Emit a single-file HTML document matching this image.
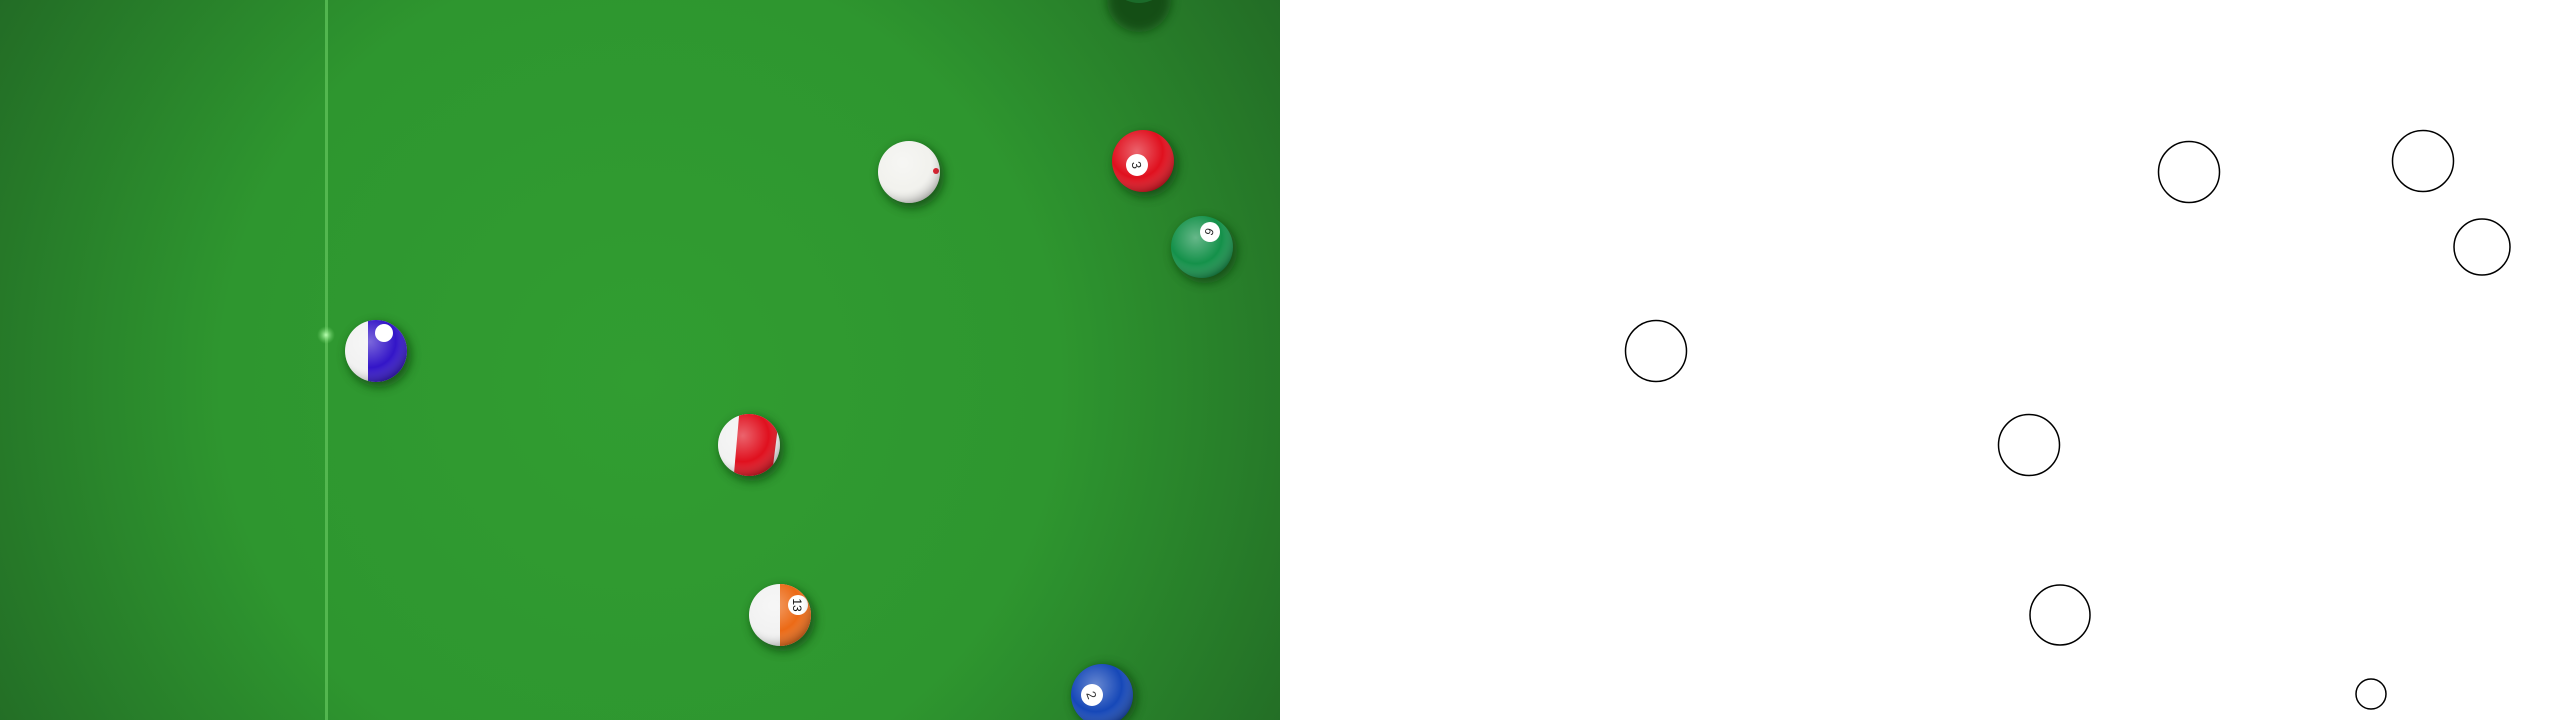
<!DOCTYPE html>
<html><head><meta charset="utf-8"><style>
html,body{margin:0;padding:0;width:2560px;height:720px;overflow:hidden;background:#fff}
</style></head><body>
<svg width="2560" height="720" viewBox="0 0 2560 720" xmlns="http://www.w3.org/2000/svg" style="display:block">
<defs>
<radialGradient id="felt" cx="640" cy="380" r="760" gradientUnits="userSpaceOnUse">
<stop offset="0" stop-color="#319d31"/><stop offset="0.55" stop-color="#2e962f"/><stop offset="1" stop-color="#226a25"/>
</radialGradient>
<radialGradient id="shade" cx="0.4" cy="0.35" r="0.7">
<stop offset="0" stop-color="#fff" stop-opacity="0.35"/><stop offset="0.6" stop-color="#fff" stop-opacity="0"/><stop offset="1" stop-color="#000" stop-opacity="0.35"/>
</radialGradient>
<filter id="sh" x="-50%" y="-50%" width="200%" height="200%"><feGaussianBlur stdDeviation="5"/></filter>
<radialGradient id="glow"><stop offset="0" stop-color="#b8ffb0"/><stop offset="1" stop-color="#6fd36a" stop-opacity="0"/></radialGradient>
<clipPath id="c1"><circle cx="376" cy="351" r="31"/></clipPath>
<clipPath id="c2"><circle cx="749" cy="445" r="31"/></clipPath>
<clipPath id="c3"><circle cx="780" cy="615" r="31"/></clipPath>
</defs>
<rect x="0" y="0" width="1280" height="720" fill="url(#felt)"/>
<rect x="325" y="0" width="3" height="720" fill="#5dbf57" opacity="0.8"/>
<circle cx="326" cy="335" r="9" fill="url(#glow)"/>
<g filter="url(#sh)" fill="#0b3a0c" opacity="0.7">
<circle cx="912" cy="176" r="32"/><circle cx="1146" cy="165" r="32"/><circle cx="1205" cy="251" r="32"/>
<circle cx="379" cy="355" r="32"/><circle cx="752" cy="449" r="32"/><circle cx="783" cy="619" r="32"/><circle cx="1105" cy="697" r="32"/><circle cx="1139" cy="0" r="32"/>
</g>
<!-- cue -->
<circle cx="909" cy="172" r="31" fill="#f2f2ee"/><circle cx="936" cy="171" r="3" fill="#e01020"/>
<!-- 3 -->
<circle cx="1143" cy="161" r="31" fill="#e0101e"/><circle cx="1137" cy="165" r="11" fill="#fff"/>
<text x="1137" y="170" font-family="Liberation Sans,sans-serif" font-size="13" text-anchor="middle" transform="rotate(80 1137 165)">3</text>
<!-- 6 -->
<circle cx="1202" cy="247" r="31" fill="#14914a"/><circle cx="1210" cy="232" r="10" fill="#fff"/>
<text x="1210" y="237" font-family="Liberation Sans,sans-serif" font-size="12" text-anchor="middle" transform="rotate(110 1210 232)">6</text>
<!-- 12 stripe -->
<circle cx="376" cy="351" r="31" fill="#f2f2f2"/>
<g clip-path="url(#c1)"><rect x="368" y="310" width="45" height="90" fill="#3315c8"/></g>
<circle cx="384" cy="333" r="9" fill="#fff"/>
<!-- 11 stripe -->
<circle cx="749" cy="445" r="31" fill="#f2f2f2"/>
<g clip-path="url(#c2)"><polygon points="740,405 780,410 770,490 733,485" fill="#e0101e"/></g>
<!-- 13 -->
<circle cx="780" cy="615" r="31" fill="#f2f2f2"/>
<g clip-path="url(#c3)"><rect x="780" y="575" width="40" height="80" fill="#ec6a16"/></g>
<circle cx="798" cy="605" r="10" fill="#fff"/>
<text x="798" y="610" font-family="Liberation Sans,sans-serif" font-size="12" text-anchor="middle" transform="rotate(90 798 605)">13</text>
<!-- 2 -->
<circle cx="1102" cy="695" r="31" fill="#1648b8"/><circle cx="1092" cy="695" r="11" fill="#fff"/>
<text x="1092" y="700" font-family="Liberation Sans,sans-serif" font-size="13" text-anchor="middle" transform="rotate(70 1092 695)">2</text>
<!-- top partial -->
<circle cx="1139" cy="-28" r="31" fill="#1b6b2a"/>
<g fill="url(#shade)">
<circle cx="909" cy="172" r="31"/><circle cx="1143" cy="161" r="31"/><circle cx="1202" cy="247" r="31"/><circle cx="376" cy="351" r="31"/><circle cx="749" cy="445" r="31"/><circle cx="780" cy="615" r="31"/><circle cx="1102" cy="695" r="31"/>
</g>
<g fill="none" stroke="#000" stroke-width="1.5">
<circle cx="2189" cy="172" r="30.5"/><circle cx="2423" cy="161" r="30.5"/><circle cx="2482" cy="247" r="28"/>
<circle cx="1656" cy="351" r="30.5"/><circle cx="2029" cy="445" r="30.5"/><circle cx="2060" cy="615" r="30"/><circle cx="2371" cy="694" r="15"/>
</g>
</svg>
</body></html>
